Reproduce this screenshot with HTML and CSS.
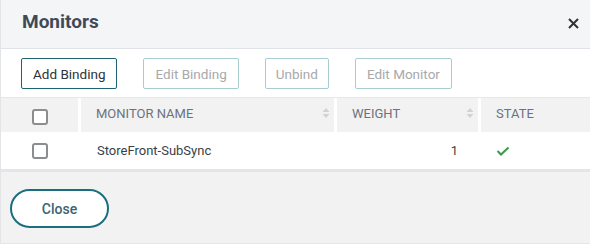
FILE: index.html
```html
<!DOCTYPE html>
<html>
<head>
<meta charset="utf-8">
<link rel="stylesheet" href="styles.css">
</head>
<body>
<div class="dialog">
  <div class="dlg-header">
    <h1 class="dlg-title">Monitors</h1>
    <button class="dlg-close" aria-label="Close">
      <svg width="11" height="11" viewBox="0 0 11 11"><path d="M1 1L10 10M10 1L1 10" stroke="#2f3338" stroke-width="2" fill="none"/></svg>
    </button>
  </div>
  <div class="toolbar">
    <button class="tbtn tbtn-active">Add Binding</button>
    <button class="tbtn">Edit Binding</button>
    <button class="tbtn tbtn-narrow">Unbind</button>
    <button class="tbtn">Edit Monitor</button>
  </div>
  <div class="table">
    <div class="thead">
      <div class="th th-check"><span class="cbox"></span></div>
      <div class="th th-sort">MONITOR NAME<span class="sort"><svg width="8" height="12" viewBox="0 0 8 12"><path d="M4 1L7.5 5H0.5Z M4 11L7.5 7H0.5Z" fill="#d0d2d4"/></svg></span></div>
      <div class="th th-sort">WEIGHT<span class="sort"><svg width="8" height="12" viewBox="0 0 8 12"><path d="M4 1L7.5 5H0.5Z M4 11L7.5 7H0.5Z" fill="#d0d2d4"/></svg></span></div>
      <div class="th">STATE</div>
    </div>
    <div class="trow">
      <div class="td td-check"><span class="cbox"></span></div>
      <div class="td">StoreFront-SubSync</div>
      <div class="td td-num">1</div>
      <div class="td td-state"><svg width="14" height="10" viewBox="0 0 14 10"><path d="M1.5 5L5 8.5L12.5 1.5" stroke="#3a9a4c" stroke-width="2" fill="none"/></svg></div>
    </div>
  </div>
  <div class="footer">
    <button class="close-btn">Close</button>
  </div>
</div>
</body>
</html>
```
FILE: styles.css
```css
* { box-sizing: border-box; }
html, body { margin: 0; padding: 0; }
body {
  width: 590px;
  height: 244px;
  overflow: hidden;
  font-family: Roboto, "Liberation Sans", sans-serif;
  background: #ffffff;
}
.dialog {
  border-left: 1px solid #e2e4e7;
  height: 244px;
  display: flex;
  flex-direction: column;
}
.dlg-header {
  height: 49px;
  background: #f4f5f7;
  border-bottom: 1px solid #dfe2e6;
  display: flex;
  align-items: center;
  justify-content: space-between;
  padding: 0 10px 0 21px;
}
.dlg-title {
  margin: 0;
  font-size: 19px;
  font-weight: 700;
  color: #3e4a57;
  position: relative;
  top: -3px;
}
.dlg-close {
  border: 0;
  background: transparent;
  padding: 0;
  width: 13px;
  height: 13px;
  display: flex;
  align-items: center;
  justify-content: center;
  position: relative;
  top: -1px;
}
.toolbar {
  height: 49px;
  display: flex;
  align-items: flex-start;
  padding: 9px 0 0 20px;
  gap: 26px;
  border-bottom: 1px solid #e6e7e9;
}
.tbtn {
  height: 31px;
  padding: 0 11px;
  font-family: Roboto, "Liberation Sans", sans-serif;
  font-size: 13.5px;
  color: #a7a9ab;
  background: #ffffff;
  border: 1px solid #a8cdd0;
  border-radius: 2px;
}
.tbtn-narrow {
  padding: 0 10px;
}
.tbtn-active {
  color: #2d3338;
  border-color: #1e6470;
}
.table {
  background: #ffffff;
}
.thead {
  display: grid;
  grid-template-columns: 77px 253px 141px 1fr;
  column-gap: 3px;
  height: 34px;
}
.th {
  background: #f2f2f2;
  color: #6c737b;
  font-size: 13px;
  padding: 8px 0 0 15px;
  display: flex;
  align-items: flex-start;
}
.th-sort {
  justify-content: space-between;
  padding-right: 4px;
}
.th-check {
  justify-content: center;
  padding: 11px 0 0 0;
}
.sort {
  display: flex;
  margin-top: 1px;
}
.trow {
  display: grid;
  grid-template-columns: 77px 253px 141px 1fr;
  column-gap: 3px;
  align-items: center;
  border-bottom: 3px solid #e4e5e7;
  height: 40px;
}
.td {
  font-size: 13px;
  color: #3a3f44;
  padding-left: 16px;
}
.td-check {
  display: flex;
  justify-content: center;
  padding-left: 0;
}
.td-num {
  text-align: right;
  padding-right: 20px;
}
.td-state {
  padding-left: 15px;
  display: flex;
}
.cbox {
  display: block;
  width: 16px;
  height: 16px;
  border: 2px solid #8c8d8f;
  border-radius: 3px;
  background: #ffffff;
}
.footer {
  flex: 1;
  background: #f2f2f2;
  border-bottom: 1px solid #e4e6e9;
  padding: 17px 0 0 9px;
}
.close-btn {
  width: 99px;
  height: 39px;
  border: 2px solid #1a6e7e;
  border-radius: 20px;
  background: #ffffff;
  color: #3c6476;
  font-family: Roboto, "Liberation Sans", sans-serif;
  font-size: 14px;
  font-weight: 500;
}
```
